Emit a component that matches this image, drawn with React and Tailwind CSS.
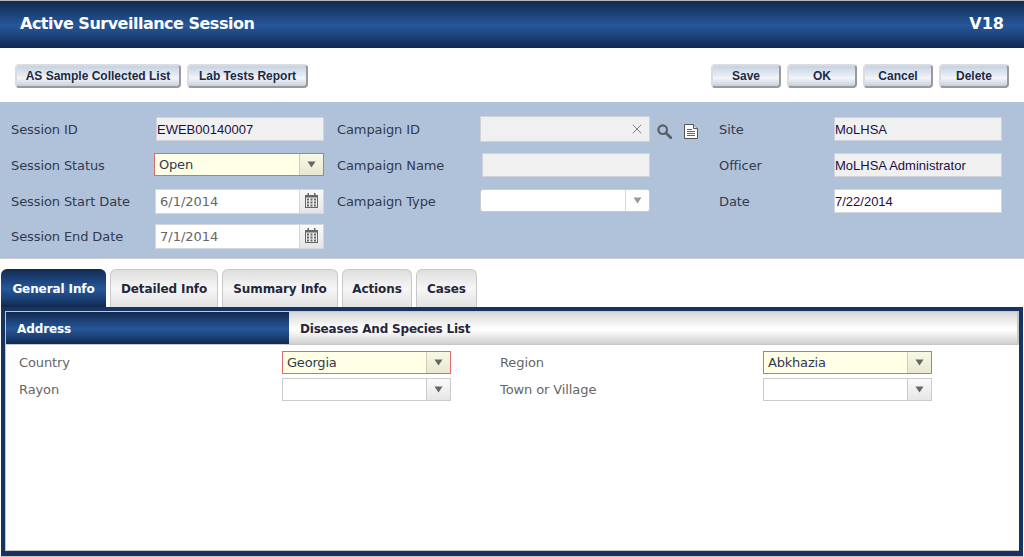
import { X } from 'lucide-react';

const navyBar = 'bg-[linear-gradient(to_bottom,#12294e_0%,#1c4279_28%,#265799_52%,#1c4279_76%,#12294e_100%)]';
const grayTab = 'bg-[linear-gradient(to_bottom,#d6d6d6_0%,#f2f2f2_35%,#ffffff_55%,#ececec_75%,#cfcfcf_100%)]';
const verdana = 'font-["DejaVu_Sans",sans-serif]';
const arial = 'font-["Liberation_Sans",sans-serif]';

const Arrow = ({ color = '#666' }) => (
  <svg width="9" height="7" viewBox="0 0 9 7">
    <path d="M0.5 0.5h8L4.5 6.5z" fill={color} />
  </svg>
);

const Calendar = () => (
  <svg width="13" height="15" viewBox="0 0 13 15">
    <path d="M0 2h13v13H0z" fill="#666" />
    <path d="M2.5 0h1.5v3H2.5zM9 0h1.5v3H9z" fill="#666" />
    <path d="M1 4.5h11v9.5H1z" fill="#eee" />
    <path d="M2 5.5h2v2H2zM5.5 5.5h2v2h-2zM9 5.5h2v2H9zM2 8.5h2v2H2zM5.5 8.5h2v2h-2zM9 8.5h2v2H9zM2 11.5h2v2H2zM5.5 11.5h2v2h-2zM9 11.5h2v2H9z" fill="#666" />
  </svg>
);

const SearchIcon = () => (
  <svg width="15" height="15" viewBox="0 0 15 15" className="mt-[7px] ml-[7px]">
    <circle cx="5.7" cy="5.7" r="4.3" fill="none" stroke="#5a5f68" strokeWidth="2.2" />
    <path d="M9 9l4.8 4.8" stroke="#5a5f68" strokeWidth="2.8" strokeLinecap="round" />
  </svg>
);

const DocIcon = () => (
  <svg width="14" height="15" viewBox="0 0 14 15" className="mt-[7px] ml-[12px]">
    <path d="M0.5 0.5H9.5L13.5 4.5V14.5H0.5z" fill="#fff" stroke="#555" />
    <path d="M9.5 0.5V4.5H13.5" fill="#ddd" stroke="#555" />
    <path d="M3 5.5h5M3 7.5h8M3 9.5h8M3 11.5h8" stroke="#666" />
  </svg>
);

const ActionButton = ({ label, className = '' }) => (
  <button
    className={`h-[24px] rounded-[4px] border-2 border-[#dcdcdc] border-r-[#9a9a9a] border-b-[#9a9a9a] bg-[linear-gradient(to_bottom,#c5d2e3_0%,#e9eef5_50%,#f4f6f9_60%,#c5d0df_100%)] pb-[1px] text-[12px] font-bold text-[#1d2a44] ${arial} ${className}`}
  >
    {label}
  </button>
);

const Label = ({ children }) => (
  <div className={`h-[24px] leading-[26px] text-[13px] tracking-[-0.1px] text-[#333a4d] whitespace-nowrap ${verdana}`}>{children}</div>
);

const ReadOnly = ({ value, className = '' }) => (
  <div
    className={`h-[24px] border border-[#d0d4da] bg-[#f0f0f0] leading-[24px] text-[13px] text-[#1c0f45] ${arial} ${className}`}
  >
    {value}
  </div>
);

const DateField = ({ value }) => (
  <div className="ml-[-1px] flex h-[25px] border border-[#d3d6da] bg-white">
    <div className={`flex-1 pl-[4px] leading-[23px] text-[13px] text-[#666] ${verdana}`}>{value}</div>
    <div className="flex w-[24px] items-start justify-center border-l border-[#d3d6da] bg-[linear-gradient(to_bottom,#fafafa,#e4e4e4)] pt-[3px]">
      <Calendar />
    </div>
  </div>
);

const Select = ({ value = '', required = false, rounded = false, className = '' }) => (
  <div
    className={`flex h-[23px] border ${required ? 'border-[#e06a70] bg-[#ffffe6]' : 'border-[#cbcbcb] bg-white'} ${rounded ? 'rounded-[3px]' : ''} ${className}`}
  >
    <div className={`flex-1 pl-[4px] leading-[21px] text-[13px] tracking-[-0.2px] text-[#333a4d] ${verdana}`}>{value}</div>
    <div
      className={`flex w-[24px] items-center justify-center border-l ${required ? 'border-[#cfcfb8] bg-[linear-gradient(to_bottom,#f8f8e4,#e8e8d2)]' : rounded ? 'border-[#d8d8d8]' : 'border-[#cbcbcb] bg-[linear-gradient(to_bottom,#fafafa,#e6e6e6)]'}`}
    >
      <Arrow color={rounded ? '#999' : '#666'} />
    </div>
  </div>
);

const tabs = [
  { label: 'General Info', width: 'w-[105px]', active: true },
  { label: 'Detailed Info', width: 'w-[108px]' },
  { label: 'Summary Info', width: 'w-[116px]' },
  { label: 'Actions', width: 'w-[70px]' },
  { label: 'Cases', width: 'w-[61px]' },
];

export default function App() {
  return (
    <div className={`h-[557px] w-[1024px] overflow-hidden bg-white ${verdana}`}>
      <div className="h-px bg-[#b8b8b8]" />
      {/* Header */}
      <div className={`flex h-[47px] items-center justify-between pl-[20px] pr-[20px] pb-[1px] text-white font-bold ${navyBar}`}>
        <span className="text-[16px] tracking-[-0.5px]">Active Surveillance Session</span>
        <span className="text-[16px]">V18</span>
      </div>

      {/* Toolbar */}
      <div className="flex h-[54px] items-start justify-between pt-[16px] pl-[15px] pr-[15px]">
        <div className="flex gap-[6px]">
          <ActionButton label="AS Sample Collected List" className="w-[166px]" />
          <ActionButton label="Lab Tests Report" className="w-[121px]" />
        </div>
        <div className="flex gap-[6px]">
          <ActionButton label="Save" className="w-[70px]" />
          <ActionButton label="OK" className="w-[70px]" />
          <ActionButton label="Cancel" className="w-[70px]" />
          <ActionButton label="Delete" className="w-[70px]" />
        </div>
      </div>

      {/* Session form */}
      <div className="h-[157px] border-b border-[#d0d0d0] bg-[#b0c2da] pt-[15px] pl-[11px]">
        <div className="grid grid-cols-[145px_168px_13px_143px_170px_69px_115px_168px] grid-rows-[36px_36px_35px_24px]">
          <Label>Session ID</Label>
          <ReadOnly value="EWEB00140007" />
          <div />
          <Label>Campaign ID</Label>
          <div className="flex h-[26px] -mt-px items-center justify-end border border-[#cfd3d9] bg-[#f0f0f0] pr-[4px]">
            <X size={16} strokeWidth={1} color="#444" />
          </div>
          <div className="flex items-start">
            <SearchIcon />
            <DocIcon />
          </div>
          <Label>Site</Label>
          <ReadOnly value="MoLHSA" />

          <Label>Session Status</Label>
          <Select value="Open" required className="ml-[-2px]" />
          <div />
          <Label>Campaign Name</Label>
          <ReadOnly value="" className="ml-[2px]" />
          <div />
          <Label>Officer</Label>
          <ReadOnly value="MoLHSA Administrator" />

          <Label>Session Start Date</Label>
          <DateField value="6/1/2014" />
          <div />
          <Label>Campaign Type</Label>
          <Select rounded />
          <div />
          <Label>Date</Label>
          <div className={`h-[24px] border border-[#d3d6da] bg-white leading-[24px] text-[13px] text-[#1c0f45] ${arial}`}>7/22/2014</div>

          <Label>Session End Date</Label>
          <DateField value="7/1/2014" />
        </div>
      </div>

      {/* Tabs */}
      <div className="flex h-[48px] items-end gap-[4px] pl-[1px]">
        {tabs.map((tab) => (
          <div
            key={tab.label}
            className={`flex h-[38px] items-center justify-center rounded-t-[6px] pt-[1px] text-[12px] tracking-[-0.1px] font-bold ${tab.width} ${
              tab.active
                ? `text-white ${navyBar}`
                : 'border border-b-0 border-[#c8c8c8] bg-[linear-gradient(to_bottom,#dedede_0%,#f6f6f6_50%,#e2e2e2_100%)] text-[#26263a]'
            }`}
          >
            {tab.label}
          </div>
        ))}
      </div>

      {/* Tab content */}
      <div className="ml-px mr-px h-[249px] border-[4px] border-b-[5px] border-[#17335f] bg-white">
        <div className="h-full border-l border-t border-b border-[#c8c8c8]">
          <div className="flex h-[33px] border-b border-[#c8c8c8]">
            <div className={`flex w-[283px] items-center pt-[1px] pl-[11px] text-[12px] tracking-[-0.1px] font-bold text-white ${navyBar}`}>Address</div>
            <div className={`flex flex-1 items-center border-r-2 border-[#c8c8c8] pt-[1px] pl-[11px] text-[12px] tracking-[-0.2px] font-bold text-[#26263a] ${grayTab}`}>
              Diseases And Species List
            </div>
          </div>
          <div className="grid grid-cols-[263px_169px_49px_263px_169px] grid-rows-[27px_23px] pt-[6px] pl-[13px] text-[13px] tracking-[-0.1px] text-[#666]">
            <div className="leading-[23px]">Country</div>
            <Select value="Georgia" required />
            <div />
            <div className="leading-[23px]">Region</div>
            <Select value="Abkhazia" required />
            <div className="leading-[23px]">Rayon</div>
            <Select />
            <div />
            <div className="leading-[23px]">Town or Village</div>
            <Select />
          </div>
        </div>
      </div>
      <div className="h-px bg-[#c8c8c8]" />
    </div>
  );
}
